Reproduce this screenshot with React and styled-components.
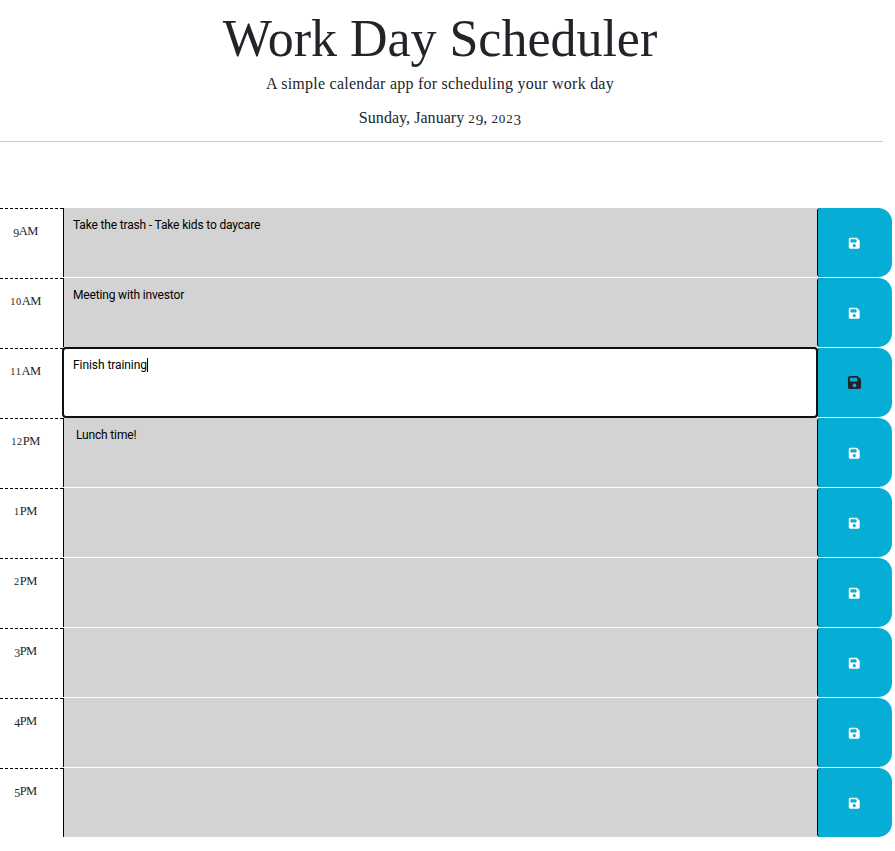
import React from "react";
import styled, { createGlobalStyle } from "styled-components";
import { FaFloppyDisk } from "react-icons/fa6";

const GlobalStyle = createGlobalStyle`
  *, *::before, *::after { box-sizing: border-box; }
  body {
    margin: 0;
    background: #fff;
    color: #212529;
    font-family: "Liberation Serif", serif;
    overflow: hidden;
  }
`;

const Header = styled.header`
  width: 883px;
  height: 142px;
  padding: 8px 3px 0 0;
  border-bottom: 1px solid #c8c9ca;
  text-align: center;
`;

const Title = styled.h1`
  margin: 0;
  font-size: 52px;
  font-weight: 400;
  line-height: 62px;
  letter-spacing: -0.02px;
`;

const Lead = styled.p`
  margin: ${(p) => p.$gap}px 0 0;
  font-size: 16px;
  line-height: 24px;
  letter-spacing: ${(p) => p.$tracking}px;
`;

const ShortDigit = styled.span`
  font-size: 0.82em;
  letter-spacing: 0.06em;
`;

const LowDigit = styled.span`
  font-size: 0.95em;
  line-height: 0;
  vertical-align: -0.15em;
`;

const Planner = styled.main`
  display: grid;
  grid-auto-rows: 69px;
  row-gap: 1px;
  width: 892px;
  margin-top: 66px;
`;

const TimeBlock = styled.section`
  display: grid;
  grid-template-columns: 63px 754px 75px;
`;

const Hour = styled.div`
  padding: 13px 12px 0 0;
  border-top: 1px dashed #000;
  font-size: 12.5px;
  line-height: 18px;
  letter-spacing: -0.5px;
  text-align: center;
  white-space: nowrap;
`;

const Entry = styled.div`
  display: flex;
  align-items: flex-start;
  padding: 9px 9px 0 ${(p) => (p.$indented ? 12 : 9)}px;
  border-left: 1px solid #000;
  background: ${(p) => (p.$focused ? "#fff" : "#d3d3d3")};
  outline: ${(p) => (p.$focused ? "2px solid #101010" : "none")};
  outline-offset: -1px;
  border-radius: ${(p) => (p.$focused ? 3 : 0)}px;
  z-index: ${(p) => (p.$focused ? 1 : 0)};
  color: #000;
  font-family: Roboto, sans-serif;
  font-size: 12px;
  line-height: 16px;
  letter-spacing: ${(p) => (p.$focused ? -0.07 : -0.16)}px;
`;

const Caret = styled.span`
  width: 1px;
  height: 14px;
  margin-top: 1px;
  background: #000;
`;

const SaveButton = styled.button`
  display: flex;
  align-items: center;
  justify-content: center;
  padding: ${(p) => (p.$active ? "0 2px 1px 0" : "1px 2px 0 0")};
  border: 0;
  border-left: 1px solid #000;
  border-radius: 3px 14px 14px 3px;
  background: #06aed5;
  color: ${(p) => (p.$active ? "#212529" : "#fff")};
  font-size: ${(p) => (p.$active ? 15 : 12.5)}px;
`;

function OldStyle({ text }) {
  return text.split(/(\d)/).map((part, i) => {
    if (/^[012]$/.test(part)) return <ShortDigit key={i}>{part}</ShortDigit>;
    if (/^[34579]$/.test(part)) return <LowDigit key={i}>{part}</LowDigit>;
    return part;
  });
}

const blocks = [
  { hour: "9AM", text: "Take the trash - Take kids to daycare" },
  { hour: "10AM", text: "Meeting with investor" },
  { hour: "11AM", text: "Finish training", focused: true },
  { hour: "12PM", text: "Lunch time!", indented: true },
  { hour: "1PM" },
  { hour: "2PM" },
  { hour: "3PM" },
  { hour: "4PM" },
  { hour: "5PM" },
];

export default function App() {
  return (
    <>
      <GlobalStyle />
      <Header>
        <Title>Work Day Scheduler</Title>
        <Lead $gap={2} $tracking={0.24}>
          A simple calendar app for scheduling your work day
        </Lead>
        <Lead $gap={10} $tracking={0.05}>
          <OldStyle text="Sunday, January 29, 2023" />
        </Lead>
      </Header>
      <Planner>
        {blocks.map(({ hour, text, focused, indented }) => (
          <TimeBlock key={hour}>
            <Hour>
              <OldStyle text={hour} />
            </Hour>
            <Entry $focused={focused} $indented={indented}>
              {text}
              {focused && <Caret />}
            </Entry>
            <SaveButton $active={focused} aria-label={`Save ${hour}`}>
              <FaFloppyDisk />
            </SaveButton>
          </TimeBlock>
        ))}
      </Planner>
    </>
  );
}
